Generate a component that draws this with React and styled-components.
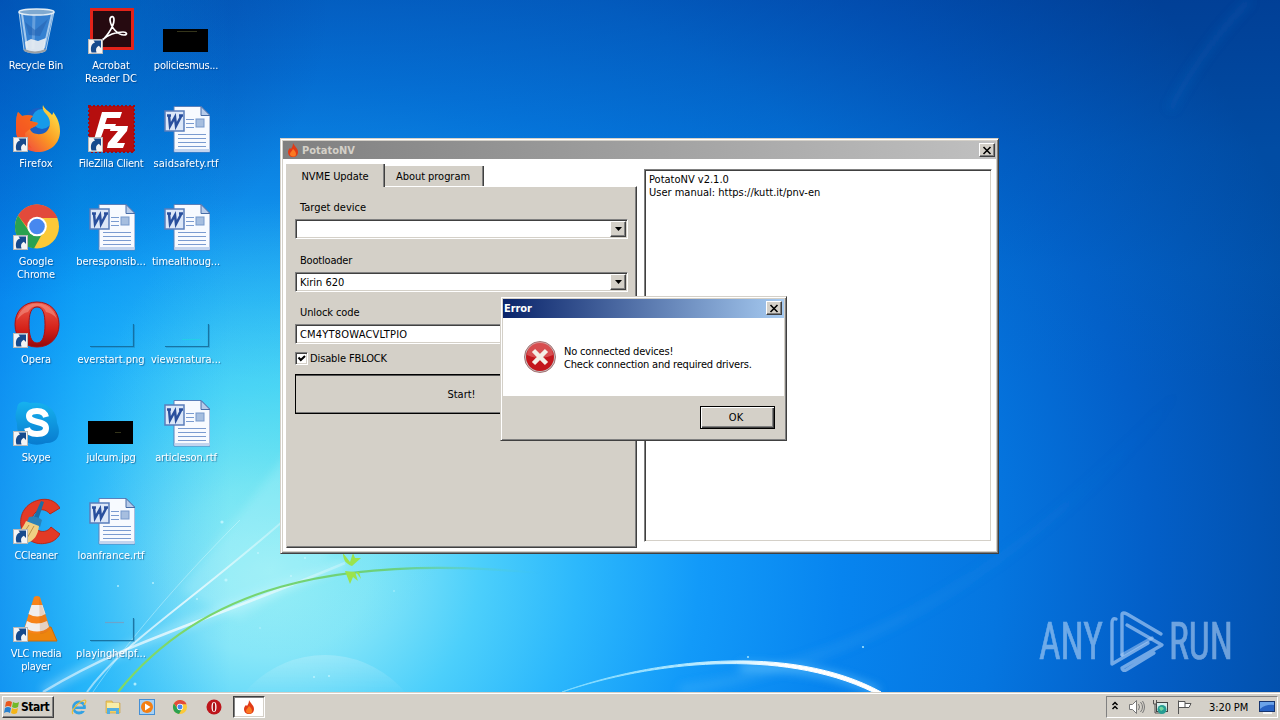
import React from 'react'
import styled, { createGlobalStyle, css } from 'styled-components'

const GlobalStyle = createGlobalStyle`
  * {
    box-sizing: border-box;
  }
  body {
    margin: 0;
    overflow: hidden;
    font-family: 'DejaVu Sans Condensed', 'DejaVu Sans', sans-serif;
    font-stretch: condensed;
    font-size: 11px;
    line-height: 13px;
    letter-spacing: -0.19px;
    color: #000;
  }
`
const raised = css`
  border: 1px solid;
  border-color: #fff #404040 #404040 #fff;
  box-shadow: inset -1px -1px 0 #808080;
`
const sunken = css`
  border: 1px solid;
  border-color: #808080 #fff #fff #808080;
  box-shadow: inset 1px 1px 0 #404040, inset -1px -1px 0 #d4d0c8;
`
const Screen = styled.div`
  width: 1280px;
  height: 720px;
  display: flex;
  flex-direction: column;
  overflow: hidden;
`
const Desktop = styled.main`
  position: relative;
  height: 692px;
  background: radial-gradient(ellipse 330px 300px at 0 0, rgba(0, 50, 140, 0.45), rgba(0, 60, 160, 0)),
    radial-gradient(ellipse 190px 230px at 290px 430px, rgba(70, 225, 230, 0.4), rgba(70, 225, 230, 0)),
    linear-gradient(90deg, rgba(0, 125, 235, 0.6) 0, rgba(0, 155, 247, 0.48) 80px, rgba(0, 170, 250, 0) 230px),
    linear-gradient(180deg, rgba(0, 52, 140, 0.42) 0, rgba(0, 85, 175, 0.3) 150px, rgba(0, 110, 200, 0.15) 270px, rgba(0, 110, 200, 0) 380px),
    radial-gradient(
      ellipse 1100px 960px at 270px 570px,
      #a2f0f8 0%,
      #86e6f8 9%,
      #4ccffb 19%,
      #2cb8fc 28%,
      #129af9 39%,
      #0784ef 52%,
      #0576e0 66%,
      #035fc8 80%,
      #01489e 100%
    );
`
const Wallpaper = styled.svg`
  position: absolute;
  inset: 0;
`
const IconGrid = styled.div`
  position: relative;
  width: 225px;
  padding-top: 7px;
  display: grid;
  grid-auto-flow: column;
  grid-template-columns: repeat(3, 75px);
  grid-template-rows: repeat(7, 98px);
`
const Shortcut = styled.div`
  display: flex;
  flex-direction: column;
  align-items: center;
  padding-right: 3px;
  gap: 4px;
  svg {
    flex: none;
  }
`
const Label = styled.span`
  color: #fff;
  white-space: pre;
  text-align: center;
  text-shadow: 1px 1px 1px rgba(0, 30, 80, 0.45);
  letter-spacing: ${({ $tracking }) => $tracking ?? -0.25}px;
`
const Frame = styled.section`
  position: absolute;
  left: ${({ $x }) => $x}px;
  top: ${({ $y }) => $y}px;
  width: ${({ $w }) => $w}px;
  height: ${({ $h }) => $h}px;
  padding: 1px;
  display: flex;
  flex-direction: column;
  background: #d4d0c8;
  border: 1px solid;
  border-color: #d4d0c8 #404040 #404040 #d4d0c8;
  box-shadow: inset 1px 1px 0 #fff, inset -1px -1px 0 #808080;
`
const TitleBar = styled.header`
  flex: none;
  height: 18px;
  margin: 1px 1px 0;
  padding: 0 1px 0 4px;
  display: flex;
  align-items: center;
  gap: 3px;
  font-weight: bold;
  color: #d4d0c8;
  background: linear-gradient(90deg, #808080, #c0c0c0);
  ${({ $active }) =>
    $active &&
    css`
      height: 19px;
      padding: 0 2px 1px 1px;
      color: #fff;
      background: linear-gradient(90deg, #0a246a, #a6caf0);
    `}
`
const Title = styled.h1`
  flex: 1;
  margin: 0;
  font: inherit;
  letter-spacing: ${({ $tracking }) => $tracking}px;
`
const CloseButton = styled.button`
  ${raised}
  width: 16px;
  height: 14px;
  padding: 0;
  display: flex;
  align-items: center;
  justify-content: center;
  background: #d4d0c8;
`
const Client = styled.div`
  flex: 1;
  margin: 0 1px 1px;
  display: flex;
  background: #fff;
  padding: 5px 4px 3px 3px;
  gap: 7px;
`
const Tabs = styled.div`
  width: 351px;
  display: flex;
  flex-direction: column;
`
const TabList = styled.div`
  height: 22px;
  display: flex;
  align-items: flex-end;
`
const Tab = styled.button`
  width: 99px;
  height: ${({ $selected }) => ($selected ? 23 : 20)}px;
  margin-bottom: ${({ $selected }) => ($selected ? -1 : 0)}px;
  padding: ${({ $selected }) => ($selected ? '1px 0 0' : '0 2px 0 0')};
  font: inherit;
  letter-spacing: ${({ $selected }) => ($selected ? -0.1 : -0.05)}px;
  color: #000;
  background: #d4d0c8;
  border: solid #404040;
  border-width: 0 1px 0 0;
  box-shadow: inset -1px 0 0 #808080;
  position: relative;
`
const Panel = styled.div`
  flex: 1;
  padding: 14px 8px 0;
  background: #d4d0c8;
  border: 1px solid;
  border-color: #fff #404040 #404040 #d4d0c8;
  box-shadow: inset -1px -1px 0 #808080;
`
const Field = styled.label`
  display: flex;
  flex-direction: column;
  margin-bottom: ${({ $gap }) => $gap}px;
`
const FieldName = styled.span`
  padding-left: 5px;
  margin-bottom: 5px;
  letter-spacing: ${({ $tracking }) => $tracking ?? -0.2}px;
`
const Input = styled.div`
  ${sunken}
  height: 20px;
  padding: 1px 1px 1px 4px;
  display: flex;
  align-items: center;
  justify-content: space-between;
  background: #fff;
  letter-spacing: ${({ $tracking }) => $tracking ?? 0}px;
`
const DropButton = styled.span`
  ${raised}
  width: 16px;
  height: 16px;
  display: flex;
  align-items: center;
  justify-content: center;
  background: #d4d0c8;
`
const CheckRow = styled.label`
  height: 13px;
  display: flex;
  align-items: center;
  gap: 2px;
  margin: 8px 0 9px;
  letter-spacing: -0.12px;
`
const CheckBox = styled.span`
  ${sunken}
  width: 13px;
  height: 13px;
  background: #fff;
  display: flex;
`
const StartButton = styled.button`
  width: 333px;
  height: 40px;
  padding: 0;
  font: inherit;
  letter-spacing: 0;
  color: #000;
  background: #d4d0c8;
  border: 1px solid #000;
  box-shadow: inset 0 1px 0 #555, inset 0 -1px 0 #777;
`
const Log = styled.pre`
  ${sunken}
  flex: 1;
  height: 373px;
  margin: 5px 0 0;
  padding: 3px 4px;
  font: inherit;
  letter-spacing: 0;
  background: #fff;
`
const Message = styled.div`
  flex: none;
  height: 78px;
  padding: 0 21px;
  margin: 0 1px;
  display: flex;
  align-items: center;
  gap: 8px;
  white-space: pre;
  background: #fff;
`
const MessageText = styled.p`
  margin: 0;
  padding-top: 2px;
`
const DialogFooter = styled.footer`
  flex: 1;
  padding: 10px 10px 0 0;
  display: flex;
  justify-content: flex-end;
  align-items: flex-start;
`
const OkButton = styled.button`
  width: 75px;
  height: 23px;
  padding: 0 3px 0 0;
  font: inherit;
  color: #000;
  background: #d4d0c8;
  border: 1px solid #000;
  box-shadow: inset 1px 1px 0 #fff, inset -1px -1px 0 #404040, inset -2px -2px 0 #808080;
`
const Watermark = styled.svg`
  position: absolute;
  left: 1034px;
  top: 605px;
`
const Taskbar = styled.footer`
  height: 28px;
  padding: 3px 2px 2px;
  display: flex;
  align-items: center;
  background: #d4d0c8;
  border-top: 1px solid #d4d0c8;
  box-shadow: inset 0 1px 0 #fff;
`
const StartMenu = styled.button`
  ${raised}
  width: 52px;
  height: 22px;
  padding: 0 0 0 1px;
  display: flex;
  align-items: center;
  gap: 1px;
  font: inherit;
  font-weight: bold;
  font-size: 12px;
  letter-spacing: -0.5px;
  color: #000;
  background: #d4d0c8;
`
const Pinned = styled.nav`
  flex: 1;
  margin-left: 17px;
  display: flex;
  align-items: center;
  gap: 17.8px;
`
const RunningTask = styled.span`
  width: 32px;
  height: 22px;
  margin-left: -7px;
  display: flex;
  align-items: center;
  justify-content: center;
  background: #fff;
  border: 1px solid;
  border-color: #404040 #fff #fff #404040;
  box-shadow: inset 1px 1px 0 #808080, inset -1px -1px 0 #d4d0c8;
`
const Tray = styled.div`
  width: 172px;
  height: 22px;
  padding: 0 1px 0 4px;
  display: flex;
  align-items: center;
  border: 1px solid;
  border-color: #808080 #fff #fff #808080;
`
const TrayIcon = styled.svg`
  flex: none;
  margin-left: ${({ $gap }) => $gap}px;
`
const Clock = styled.time`
  width: 42px;
  margin: 0 8px 0 16px;
  white-space: nowrap;
  letter-spacing: -0.1px;
`

const Badge = () => (
  <g>
    <rect x="1.5" y="32.5" width="14" height="14" fill="#f4f4f4" stroke="#b9b9b9" />
    <path d="M4.500 45.500c-1.500-5 0-9 3.500-10L6.500 33.500H14V41l-2.200-2.200C9 40 8.500 42.500 9.500 45.500z" fill="#174a8c" />
  </g>
)

const RecycleBin = () => (
  <>
    <path d="M7 5l5 38c3 4 20 4 22 0l8-38z" fill="#4c90d8" fillOpacity=".7" stroke="#a8cbe9" />
    <path d="M10 7l5 34M40 7l-8 34" stroke="#d3e8fa" strokeWidth="2" opacity=".7" />
    <path d="M22 8l-1 34" stroke="#d3e8fa" strokeWidth="3" opacity=".3" />
    <path d="M13 15l10 8 13-11-8 17-11-1z" fill="#2463b0" opacity=".55" />
    <path d="M13 35l6-3 7 2 8-3-2 12c-3 3-15 3-18 0z" fill="#eceff2" opacity=".9" />
    <ellipse cx="24.500" cy="5" rx="17.500" ry="3" fill="#7fa9d0" stroke="#e2edf5" strokeWidth="1.500" />
    <path d="M12 43q11 5 22 0" stroke="#9aa0a6" strokeWidth="2" fill="none" />
  </>
)
const Acrobat = () => (
  <>
    <rect x="3" y="1" width="44" height="42" fill="#e2231a" />
    <rect x="6" y="4" width="38" height="36" fill="#260a10" />
    <path
      d="M13 35c5-3 14-15 14-22 0-5-4-4-4 0 1 8 8 15 14 15 4 0 3-3-1-3-7 0-15 3-21 8-2 1-3 2-2 2z"
      fill="none"
      stroke="#fff"
      strokeWidth="1.700"
    />
    <Badge />
  </>
)
const Thumb = ({ mark }) => (
  <>
    <rect x="1" y="22" width="45" height="23" fill="#000" />
    <path d={mark} stroke="#4b4a25" opacity=".7" />
  </>
)
const ClearThumb = ({ mark, color }) => (
  <>
    <path d="M3 45.500H46.500V23" stroke="#12618e" strokeOpacity=".8" strokeWidth="1.200" fill="none" />
    <path d="M4 46.500H47.500V24" stroke="#12618e" strokeOpacity=".25" fill="none" />
    {mark && <path d={mark} stroke={color} strokeWidth="1.200" opacity=".7" />}
  </>
)
const Firefox = () => (
  <>
    <circle cx="27" cy="18" r="15" fill="#1a5fc4" />
    <circle cx="30" cy="14" r="10" fill="#179bea" />
    <path
      d="M31 0c1 4 5 5 9 10 1-1 1-2 1-3 5 6 7 13 7 19 0 13-10 21-22 21S4 38 4 25C4 17 4 12 6 7l4 4c4-1 8-1 11 0-2 2-3 3-3 5 3 1 6 1 8 2-1 3-5 4-8 6 2 6 12 7 17 2 5-6 3-13-1-17-3-3-4-6-3-9z"
      fill="url(#ff)"
    />
    <path d="M6 7l4 4c4-1 8-1 11 0-2 2-3 3-3 5 3 1 6 1 8 2-1 3-5 4-8 6l-5 4c0 5 3 11 7 15C10 40 4 33 4 25 4 17 4 12 6 7z" fill="#f4511e" opacity=".75" />
    <Badge />
  </>
)
const FileZilla = () => (
  <>
    <rect x="2" y="1" width="45" height="46" fill="#b50e0e" stroke="#a20b12" strokeWidth="2" strokeDasharray="2 2" />
    <path d="M15 7h20l-2 6H20l-2 6h11l-2 5H17l-5 14H6z" fill="#fff" />
    <path d="M24 21h17l-1 5-10 12h8l-2 5H20l1-5 10-12h-8z" fill="#fff" />
    <Badge />
  </>
)
const WordDoc = () => (
  <>
    <path d="M12 1.500h27l9 9V47H12z" fill="#f7faff" stroke="#5b80ba" />
    <path d="M12.500 44h35v3h-35z" fill="#c3d4ee" />
    <path d="M39 1.500l9 9h-9z" fill="#b7cbe9" stroke="#486da8" />
    <path d="M24 14.500h8M24 18.500h8M24 22.500h8M16 29.500h28M16 33.500h28M16 37.500h28M16 41.500h28" stroke="#7a9bd0" />
    <rect x="34" y="14" width="8" height="8" fill="#a6bedf" stroke="#7698cb" />
    <rect x="3" y="6" width="19" height="20" fill="#dce7f8" stroke="#5a7dbb" strokeWidth="1.500" />
    <path d="M5 10.500h4M7 10.500l1 10.500 5-9 1 9 5.500-10.500M17 10.500h4" fill="none" stroke="#294f9d" strokeWidth="2.500" />
  </>
)
const ChromeShape = () => (
  <>
    <circle cx="25" cy="23.500" r="22" fill="#fbc938" />
    <path d="M6 12.500A22 22 0 0 1 45.500 15H25a9 9 0 0 0-8.500 11z" fill="#e24a3b" />
    <path d="M6 12.500L17 28c3 6 9 6 13 3l-8 14.500A22 22 0 0 1 6 12.500z" fill="#2aa150" />
    <circle cx="25" cy="23.500" r="9.800" fill="#fff" />
    <circle cx="25" cy="23.500" r="7.800" fill="#4788ef" />
  </>
)
const Chrome = () => (
  <>
    <ChromeShape />
    <Badge />
  </>
)
const Opera = () => (
  <>
    <path
      d="M25 1C12 1 3 10 3 23.500S12 46 25 46s22-9 22-22.500S38 1 25 1zm0 5c6 0 8 7 8 17.500S31 42 25 42s-8-8-8-18.500S19 6 25 6z"
      fill="url(#opera)"
      stroke="#a91014"
    />
    <path d="M5 19C8 8 15 2.500 25 2.500S42 8 45 18c-3-4-6-6-11-7-2-5-5-6-9-6s-7 2-9 6c-5 1-8 4-11 8z" fill="#f6a091" opacity=".5" />
    <Badge />
  </>
)
const Skype = () => (
  <>
    <path d="M5 10C5 3 11 1 18 4c15-2 27 6 27 20 5 11 0 21-11 20C17 50 4 39 5 24c-2-5-2-9 0-14z" fill="url(#skype)" />
    <path
      d="M34 18c-1-4-4-6-9-6s-8 2-8 5c0 8 17 4 17 12 0 5-4 6-9 6s-9-2-10-6"
      fill="none"
      stroke="#fff"
      strokeWidth="6"
    />
    <Badge />
  </>
)
const CCleaner = () => (
  <>
    <path
      d="M48 11C43 3 35 1 27 3 14 6 7 17 9 29c2 13 14 20 26 17 6-1 10-4 13-9l-9-7c-3 5-10 6-15 2-5-5-5-12-1-16 4-5 11-4 15 1z"
      fill="#e33a25"
      stroke="#b92817"
    />
    <path d="M29 4l3 1-6 18-5-1z" fill="#1c6ea5" />
    <path d="M17 20q7-2 13 3l-2 7-13-5z" fill="#2b82b8" />
    <path d="M14 24l13 5c-1 9-5 15-12 17-6-1-10-5-14-9 6-1 10-6 13-13z" fill="#efd083" />
    <path d="M17 28l-8 12M22 29l-8 14" stroke="#bd9049" />
    <Badge />
  </>
)
const Vlc = () => (
  <>
    <path d="M11 35l28-3 6 14H9z" fill="#ed850d" stroke="#cb6a08" />
    <path d="M22 2q3-2 6 0l10 32c-5 6-22 6-26 0z" fill="#f7841a" />
    <path d="M19.500 10h11l3 9q-8 5-17 0zM15 26q9 5 20 0l2 6c-6 6-18 6-24 0z" fill="#f1eeed" />
    <path d="M27 2l11 32c-3 3-6 5-10 5z" fill="#ba5e17" opacity=".2" />
    <Badge />
  </>
)

const shortcuts = [
  { name: 'Recycle Bin', icon: <RecycleBin /> },
  { name: 'Firefox', icon: <Firefox />, tracking: 0.1 },
  { name: 'Google\nChrome', icon: <Chrome />, tracking: -0.1 },
  { name: 'Opera', icon: <Opera />, tracking: -0.1 },
  { name: 'Skype', icon: <Skype /> },
  { name: 'CCleaner', icon: <CCleaner /> },
  { name: 'VLC media\nplayer', icon: <Vlc />, tracking: -0.3 },
  { name: 'Acrobat\nReader DC', icon: <Acrobat />, tracking: -0.1 },
  { name: 'FileZilla Client', icon: <FileZilla />, tracking: -0.3 },
  { name: 'beresponsib...', icon: <WordDoc />, tracking: 0 },
  { name: 'everstart.png', icon: <ClearThumb />, tracking: 0 },
  { name: 'julcum.jpg', icon: <Thumb mark="M28 33.500h6" /> },
  { name: 'loanfrance.rtf', icon: <WordDoc />, tracking: 0 },
  { name: 'playinghelpf...', icon: <ClearThumb mark="M18 27.500h19" color="#8297b7" />, tracking: 0 },
  { name: 'policiesmus...', icon: <Thumb mark="M15 24.500h20" /> },
  { name: 'saidsafety.rtf', icon: <WordDoc />, tracking: 0.1 },
  { name: 'timealthoug...', icon: <WordDoc />, tracking: -0.1 },
  { name: 'viewsnatura...', icon: <ClearThumb mark="M20 38.500h18" color="#20d5e4" />, tracking: 0 },
  { name: 'articleson.rtf', icon: <WordDoc />, tracking: -0.1 },
]

const sparkles = [
  [118, 586, 1], [153, 583, 1], [226, 580, 1.6], [135, 684, 1.5], [197, 599, 1], [258, 553, 1],
  [222, 522, 1.6], [305, 558, 1], [291, 576, 1], [260, 628, 0.8], [314, 677, 1], [329, 676, 1],
  [863, 647, 1.1], [748, 657, 1], [394, 591, 0.8],
]

const Flame = () => (
  <svg width="12" height="14" viewBox="0 0 12 14">
    <path d="M6 0c1 3 5 5 5 9 0 3-2 5-5 5s-5-2-5-5c0-2 1-3 2-4l1 1c1-2 2-3 2-6z" fill="#e13b16" />
    <path d="M6 6c2 2 3 3 3 5s-1 2.500-3 2.500S3 12.500 3 11s2-3 3-5z" fill="#fb7a22" />
  </svg>
)
const Cross = () => (
  <svg width="10" height="9" viewBox="0 0 10 9">
    <path d="M1.500 1l7 7M8.500 1l-7 7" stroke="#000" strokeWidth="1.600" />
  </svg>
)
const Select = ({ value }) => (
  <Input>
    <span>{value}</span>
    <DropButton>
      <svg width="7" height="4">
        <path d="M0 0h7L3.500 4z" />
      </svg>
    </DropButton>
  </Input>
)

const Background = () => (
  <Wallpaper width="1280" height="692" fill="none">
    <defs>
      <linearGradient id="vine">
        <stop offset="0" stopColor="#82d964" />
        <stop offset=".65" stopColor="#6bd07c" />
        <stop offset="1" stopColor="#50ccd8" stopOpacity="0" />
      </linearGradient>
      <linearGradient id="beam">
        <stop offset="0" stopColor="#5abcf9" stopOpacity=".5" />
        <stop offset="1" stopColor="#2580dc" stopOpacity="0" />
      </linearGradient>
      <linearGradient id="ray">
        <stop offset="0" stopColor="#fff" stopOpacity=".5" />
        <stop offset=".5" stopColor="#fff" stopOpacity=".75" />
        <stop offset="1" stopColor="#fff" stopOpacity=".25" />
      </linearGradient>
      <linearGradient id="arc">
        <stop offset="0" stopColor="#78d8ff" />
        <stop offset=".5" stopColor="#c5eeff" />
        <stop offset=".7" stopColor="#fff" />
      </linearGradient>
      <linearGradient id="dome" x2="0" y2="1">
        <stop offset="0" stopColor="#fff" stopOpacity=".2" />
        <stop offset=".2" stopColor="#fff" stopOpacity="0" />
      </linearGradient>
      <linearGradient id="ff" x1="1" y1="0" x2="0" y2="1">
        <stop stopColor="#fff34f" />
        <stop offset=".5" stopColor="#fb9822" />
        <stop offset="1" stopColor="#ed2f4a" />
      </linearGradient>
      <linearGradient id="opera" x2="0" y2="1">
        <stop stopColor="#ec5b4c" />
        <stop offset=".6" stopColor="#d52118" />
        <stop offset="1" stopColor="#94080b" />
      </linearGradient>
      <linearGradient id="skype" x2="0" y2="1">
        <stop stopColor="#16b2ef" />
        <stop offset="1" stopColor="#087bcf" />
      </linearGradient>
      <filter id="glow" filterUnits="userSpaceOnUse" x="0" y="0" width="1280" height="692">
        <feGaussianBlur stdDeviation="5" />
      </filter>
    </defs>
    <g filter="url(#glow)">
      <path d="M180 590L290 450 330 560 240 620z" fill="#d4faff" opacity=".2" />
      <path d="M680 690C820 670 1000 600 1180 390" stroke="url(#beam)" strokeWidth="8" opacity=".7" />
      <path d="M1250 0C1220 30 1190 70 1170 110" stroke="#2180d4" strokeWidth="8" opacity=".15" />
      <path d="M43 692C130 640 190 625 345 563" stroke="#e8fdff" strokeWidth="7" opacity=".4" />
      <path d="M740 667C800 666 840 674 878 692" stroke="#7bd0ff" strokeWidth="7" opacity=".6" />
    </g>
    <circle cx="325" cy="760" r="105" fill="url(#dome)" />
    <path d="M43 692C130 640 190 628 345 563" stroke="url(#ray)" strokeWidth="2.500" />
    <path d="M87 692C120 645 190 603 290 515" stroke="url(#ray)" strokeWidth="2" />
    <path d="M93 692C125 645 175 585 240 520" stroke="#e4fcff" strokeWidth="1" opacity=".4" />
    <path d="M118 692C200 590 330 553 540 573" stroke="url(#vine)" strokeWidth="2.200" />
    <path d="M343 553c0 7 3 11 9 13l9-8-6 0-2-5-3 9zM345 571l10 1 3 9-5-4-3 7zM356 572l5 7-2-7z" fill="#9be34b" />
    <path d="M562 692C650 662 780 647 873 692L881 692C790 642 650 660 562 692z" fill="url(#arc)" stroke="url(#arc)" strokeWidth="1" />
    {sparkles.map(([x, y, r]) => (
      <circle key={`${x}-${y}`} cx={x} cy={y} r={r} fill="#c8f7ff" opacity=".8" />
    ))}
  </Wallpaper>
)

const MainWindow = () => (
  <Frame $x={280} $y={138} $w={719} $h={416}>
    <TitleBar>
      <Flame />
      <Title $tracking={0}>PotatoNV</Title>
      <CloseButton>
        <Cross />
      </CloseButton>
    </TitleBar>
    <Client>
      <Tabs>
        <TabList>
          <Tab $selected>NVME Update</Tab>
          <Tab>About program</Tab>
        </TabList>
        <Panel>
          <Field $gap={15}>
            <FieldName $tracking={0}>Target device</FieldName>
            <Select />
          </Field>
          <Field $gap={14}>
            <FieldName>Bootloader</FieldName>
            <Select value="Kirin 620" />
          </Field>
          <Field $gap={0}>
            <FieldName $tracking={-0.1}>Unlock code</FieldName>
            <Input $tracking={0.2}>CM4YT8OWACVLTPIO</Input>
          </Field>
          <CheckRow>
            <CheckBox>
              <svg width="11" height="11">
                <path d="M2.500 4.500l2.300 2.500L9 3" stroke="#000" strokeWidth="2" fill="none" />
              </svg>
            </CheckBox>
            Disable FBLOCK
          </CheckRow>
          <StartButton>Start!</StartButton>
        </Panel>
      </Tabs>
      <Log>{'PotatoNV v2.1.0\nUser manual: https://kutt.it/pnv-en'}</Log>
    </Client>
  </Frame>
)

const ErrorDialog = () => (
  <Frame $x={500} $y={296} $w={287} $h={145}>
    <TitleBar $active>
      <Title $tracking={-0.1}>Error</Title>
      <CloseButton>
        <Cross />
      </CloseButton>
    </TitleBar>
    <Message>
      <svg width="32" height="32">
        <circle cx="16" cy="16" r="15.500" fill="#c9c2c2" stroke="#8a4648" strokeWidth=".7" />
        <circle cx="16" cy="16" r="14" fill="#c3161c" />
        <path d="M3 14a13 13 0 0 1 26 0q-13 6-26 0z" fill="#e57573" opacity=".6" />
        <path d="M9.500 9.500l13 13M22.500 9.500l-13 13" stroke="#f4efe6" strokeWidth="4.500" />
      </svg>
      <MessageText>{'No connected devices!\nCheck connection and required drivers.'}</MessageText>
    </Message>
    <DialogFooter>
      <OkButton>OK</OkButton>
    </DialogFooter>
  </Frame>
)

const AnyRun = () => (
  <Watermark width="230" height="72" fill="none">
    <g opacity=".55" fill="#c6def8" stroke="#c6def8" strokeWidth=".7" fontFamily="Roboto, sans-serif" fontSize="52" letterSpacing="0">
      <text x="5" y="54" textLength="64" lengthAdjust="spacingAndGlyphs">
        ANY
      </text>
      <text x="135" y="54" textLength="64" lengthAdjust="spacingAndGlyphs">
        RUN
      </text>
    </g>
    <g stroke="#aed0f6" strokeOpacity=".65" strokeWidth="3.400" strokeLinejoin="round" strokeLinecap="round">
      <path d="M82 14c-3-1-4 1-4 4v41l36-21" />
      <path d="M88 50V10c0-3 3-2 5-1l34 20" />
      <path d="M93 20l35 20-40 23c0 2 2 3 4 2l28-17" />
      <path d="M88 50l30-17" opacity=".8" />
    </g>
  </Watermark>
)

const TaskIcon = ({ children }) => (
  <svg width="16" height="16" viewBox="0 0 16 16">
    {children}
  </svg>
)

const App = () => (
  <Screen>
    <GlobalStyle />
    <Desktop>
      <Background />
      <IconGrid>
        {shortcuts.map(({ name, icon, tracking }) => (
          <Shortcut key={name}>
            <svg width="48" height="48">
              {icon}
            </svg>
            <Label $tracking={tracking}>{name}</Label>
          </Shortcut>
        ))}
      </IconGrid>
      <AnyRun />
      <MainWindow />
      <ErrorDialog />
    </Desktop>
    <Taskbar>
      <StartMenu>
        <TaskIcon>
          <path d="M2 3q3-2 6 0L7 8Q4 6 1 8z" fill="#e9581c" />
          <path d="M9 3q3 2 6 0l-1 5q-3 2-6 0z" fill="#73b927" />
          <path d="M1 9q3-2 6 0l-1 5q-3-2-6 0z" fill="#2781cf" />
          <path d="M8 9q3 2 6 0l-1 5q-3 2-6 0z" fill="#f5b518" />
        </TaskIcon>
        Start
      </StartMenu>
      <Pinned>
        <TaskIcon>
          <circle cx="8" cy="8.500" r="5.500" fill="none" stroke="#33a2e3" strokeWidth="2.800" />
          <path d="M4 7.500h9v2.500H4z" fill="#33a2e3" />
          <path d="M11 10h4v2h-4z" fill="#d4d0c8" />
          <path d="M2 15C-1 12 8 2 14 1c2 1 0 3-1 5" fill="none" stroke="#e9bd38" strokeWidth="1.200" />
        </TaskIcon>
        <TaskIcon>
          <path d="M1 2h6l1 2h7v10H1z" fill="#f0cf67" stroke="#c99b32" strokeWidth=".6" />
          <path d="M2 4h12v5H2z" fill="#f8eda8" />
          <path d="M2 15V9h12v6h-3v-3H5v3z" fill="#54afe0" />
        </TaskIcon>
        <TaskIcon>
          <rect x=".5" y=".5" width="15" height="15" fill="#a7d1f4" stroke="#448fd5" />
          <circle cx="8" cy="8" r="6" fill="#f47f12" />
          <path d="M6 4.500l5.500 3.500L6 11.500z" fill="#fff" />
        </TaskIcon>
        <svg width="16" height="16" viewBox="0 -1 50 49">
          <ChromeShape />
        </svg>
        <TaskIcon>
          <circle cx="8" cy="8" r="7.500" fill="#bd151b" />
          <ellipse cx="8" cy="8" rx="2.500" ry="5" fill="#fff" />
          <ellipse cx="8" cy="8" rx="1.200" ry="4.500" fill="#a70f15" />
        </TaskIcon>
        <RunningTask>
          <Flame />
        </RunningTask>
      </Pinned>
      <Tray>
        <TrayIcon $gap={0} width="8" height="14" fill="none" stroke="#000" strokeWidth="1.500">
          <path d="M1.500 5L4 2.500 6.500 5M1.500 9L4 6.500 6.500 9" />
        </TrayIcon>
        <TrayIcon $gap={9} width="18" height="16">
          <path d="M1.500 5.500h3l4-4v13l-4-4h-3z" fill="#fff" stroke="#777" />
          <path d="M10.500 5q2 3 0 6M12.500 3q4 5 0 10M14.500 2q4 6 0 12" fill="none" stroke="#777" />
        </TrayIcon>
        <TrayIcon $gap={6} width="17" height="16">
          <rect x="4.500" y="3.500" width="11" height="9" fill="#d8efed" stroke="#444" />
          <path d="M1.500 1v4h3V1M3 5v9h7" stroke="#555" fill="none" />
          <circle cx="10" cy="10.500" r="4.500" fill="#279d93" />
          <path d="M7 9q3-3 5 1l-3 2z" fill="#72d5a0" />
        </TrayIcon>
        <TrayIcon $gap={7} width="17" height="16">
          <path d="M2.500 15V1.500M3 2.500h6v6H3M9 4.500h6l-2 4H9" fill="#fff" stroke="#555" />
        </TrayIcon>
        <Clock>3:20 PM</Clock>
        <TrayIcon $gap={0} width="16" height="16">
          <rect x=".5" y="2.500" width="15" height="10" fill="#2763c4" stroke="#16346e" />
          <path d="M1 3h14v3Q7 5 1 10z" fill="#6ba3e9" />
          <path d="M4 14h9" stroke="#f5f5f5" strokeWidth="2" />
        </TrayIcon>
      </Tray>
    </Taskbar>
  </Screen>
)

export default App
